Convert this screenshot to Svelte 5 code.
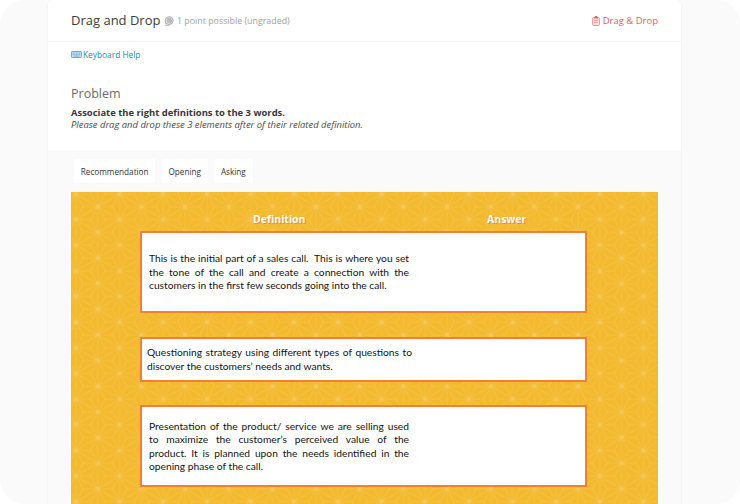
<script>
  const words = ['Recommendation', 'Opening', 'Asking'];
  const definitions = [
    {
      kind: 'first',
      lines: [
        'This is the initial part of a sales call.\u00a0 This is where you set',
        'the tone of the call and create a connection with the',
        'customers in the first few seconds going into the call.'
      ]
    },
    {
      kind: 'second',
      lines: [
        'Questioning strategy using different types of questions to',
        'discover the customers’ needs and wants.'
      ]
    },
    {
      kind: 'third',
      lines: [
        'Presentation of the product/ service we are selling used',
        'to maximize the customer’s perceived value of the',
        'product. It is planned upon the needs identified in the',
        'opening phase of the call.'
      ]
    }
  ];
</script>

<div class="page">
  <main class="card">
    <header>
      <h1>Drag and Drop</h1>
      <svg class="badge" width="10" height="10" viewBox="0 0 10 10" fill="none" stroke="#b0b0b0">
        <circle cx="5.2" cy="4.6" r="4" fill="#dedede" stroke-width=".9" />
        <circle cx="5.4" cy="4.4" r="2.2" fill="#cfcfcf" stroke-width=".7" />
        <path d="M.8 9.3h4.5M3.6 3.6h3.3M3.6 5.2h3.3M1.2 7.2l1.8.8M7 4v4" stroke-width=".9" />
      </svg>
      <span class="points">1 point possible (ungraded)</span>
      <span class="type">
        <svg width="8" height="10" viewBox="0 0 8 10" fill="none" stroke="#f28a8c">
          <rect x=".6" y="1.5" width="6.8" height="8" rx="1" fill="#fde3e3" stroke-width=".9" />
          <path d="M2 1.8h4M3 .7h2" stroke="#ee6064" stroke-width="1.2" />
          <path d="M2.2 4.6h3.6M2.2 6.6h3.6" stroke-width=".8" />
        </svg>
        <span>Drag &amp; Drop</span>
      </span>
    </header>

    <section class="intro">
      <a class="help" href="#keyboard">
        <svg width="11" height="7" viewBox="0 0 11 7" fill="none" stroke="#5aa9d3">
          <rect x=".5" y=".5" width="10" height="6" rx=".6" fill="#c4e0f0" stroke-width=".9" />
          <path d="M1.7 2.2h7.6M1.7 3.6h7.6" stroke-width=".8" stroke-dasharray="1 .6" />
          <path d="M3 5.1h5" stroke-width=".8" />
        </svg>
        <span>Keyboard Help</span>
      </a>
      <h2>Problem</h2>
      <p class="task">Associate the right definitions to the 3 words.</p>
      <p class="hint">Please drag and drop these 3 elements after of their related definition.</p>
    </section>

    <section class="exercise">
      <div class="bank">
        {#each words as word}
          <div class="word">{word}</div>
        {/each}
      </div>

      <div class="board">
        <svg class="pattern" width="100%" height="100%" aria-hidden="true">
          <defs>
            <radialGradient id="glow">
              <stop offset="0" stop-color="#fad77c" stop-opacity=".4" />
              <stop offset="1" stop-color="#fad77c" stop-opacity="0" />
            </radialGradient>
            <pattern id="asanoha" x="5" y="1.9" width="43.65" height="25.65" patternUnits="userSpaceOnUse">
              <g fill="none" stroke="#f7c95c" stroke-opacity=".4" stroke-width="1.1">
                <path d="M0 0V25.65M43.65 0V25.65M21.83 0V25.65M0 0L43.65 25.65M43.65 0L0 25.65" />
                <path d="M0 0H14.55M29.1 0H43.65M0 25.65H14.55M29.1 25.65H43.65M7.27 12.83H36.38" />
                <path d="M14.55 0L21.83 12.83L29.1 0M14.55 25.65L21.83 12.83L29.1 25.65M0 0L7.27 12.83L0 25.65M43.65 0L36.38 12.83L43.65 25.65" />
              </g>
              <g fill="url(#glow)">
                <circle cx="0" cy="0" r="2.8" />
                <circle cx="43.65" cy="0" r="2.8" />
                <circle cx="0" cy="25.65" r="2.8" />
                <circle cx="43.65" cy="25.65" r="2.8" />
                <circle cx="21.83" cy="12.83" r="2.8" />
              </g>
            </pattern>
          </defs>
          <rect width="100%" height="100%" fill="url(#asanoha)" />
        </svg>
        <div class="content">
          <div class="heads">
            <span class="definition">Definition</span>
            <span class="answer">Answer</span>
          </div>
          {#each definitions as item}
            <div class="box {item.kind}">
              <div class="text">
                {#each item.lines as line, i}
                  <div class="line" class:full={i < item.lines.length - 1}>{line}</div>
                {/each}
              </div>
            </div>
          {/each}
        </div>
      </div>
    </section>
  </main>
</div>

<style>
  :global(body) {
    background: #fff;
  }
  .page {
    box-sizing: border-box;
    width: 740px;
    height: 504px;
    padding-left: 47px;
    overflow: hidden;
    border-radius: 24px;
    background: #fafafa;
    font-family: 'Open Sans', 'Noto Sans', sans-serif;
    color: #333;
  }
  .card {
    box-sizing: border-box;
    width: 635px;
    height: 504px;
    border: solid #f5f5f5;
    border-width: 0 1px;
    border-radius: 5px 5px 0 0;
    background: #fff;
    overflow: hidden;
  }
  header {
    box-sizing: border-box;
    display: flex;
    align-items: center;
    height: 42px;
    padding: 0 23px;
    border-bottom: 1px solid #f3f3f3;
    white-space: nowrap;
  }
  h1, h2, p {
    margin: 0;
    font-weight: 400;
  }
  h1 {
    width: 93px;
    padding-bottom: 2px;
    font-size: 13px;
    line-height: 20px;
    color: #3c3c3c;
  }
  .badge {
    margin-right: 3px;
  }
  .points {
    font-size: 8.85px;
    color: #a0a0a0;
  }
  .type {
    display: flex;
    align-items: center;
    gap: 3px;
    margin-left: auto;
    font-size: 9.5px;
    color: #ee5a5f;
  }
  .intro {
    box-sizing: border-box;
    height: 108px;
    padding: 6px 23px 0;
    white-space: nowrap;
  }
  .help {
    display: flex;
    align-items: center;
    gap: 1px;
    height: 12px;
    font-size: 8.35px;
    color: #2389bf;
    text-decoration: none;
  }
  h2 {
    margin-top: 25px;
    font-size: 12.5px;
    line-height: 18px;
    color: #6c6c6c;
  }
  .task {
    margin-top: 3px;
    font-size: 9.43px;
    font-weight: 700;
    line-height: 13px;
    color: #383838;
  }
  .hint {
    font-size: 9.43px;
    font-style: italic;
    line-height: 12px;
    color: #4a4a4a;
  }
  .exercise {
    padding: 9px 23px 0;
    background: #fafafa;
  }
  .bank {
    display: flex;
    gap: 6.3px;
    height: 33px;
    padding-left: 3px;
  }
  .word {
    height: 24px;
    padding: 0 6.8px;
    border-radius: 2px;
    background: #fff;
    font-size: 8.2px;
    line-height: 25px;
    color: #333;
  }
  .board {
    display: grid;
    width: 586.5px;
    height: 312px;
    background: #f3ba2f;
    overflow: hidden;
  }
  .pattern, .content {
    grid-area: 1 / 1;
  }
  .content {
    position: relative;
    padding-left: 69px;
  }
  .heads {
    display: flex;
    height: 39px;
    font-size: 10.5px;
    font-weight: 700;
    line-height: 54px;
    color: #fff;
    text-shadow: 1px 1px 0 #ef8a35;
  }
  .definition {
    width: 234px;
    padding-left: 113px;
  }
  .box {
    box-sizing: border-box;
    display: flex;
    align-items: center;
    width: 447px;
    border: 2px solid #f28033;
    background: #fff;
    font-family: Lato, 'Liberation Sans', sans-serif;
    font-size: 10.24px;
    line-height: 13.4px;
    color: #141414;
  }
  .first {
    height: 82px;
    margin-bottom: 24px;
  }
  .second {
    height: 45px;
    margin-bottom: 23px;
  }
  .third {
    height: 82px;
  }
  .text {
    width: 260px;
    margin-left: 7px;
    padding-top: 1px;
  }
  .second .text {
    width: 265px;
    margin-left: 5px;
    padding-top: 0;
  }
  .line {
    white-space: nowrap;
  }
  .full {
    white-space: normal;
    word-spacing: -0.4px;
    text-align: justify;
    text-align-last: justify;
  }
</style>
